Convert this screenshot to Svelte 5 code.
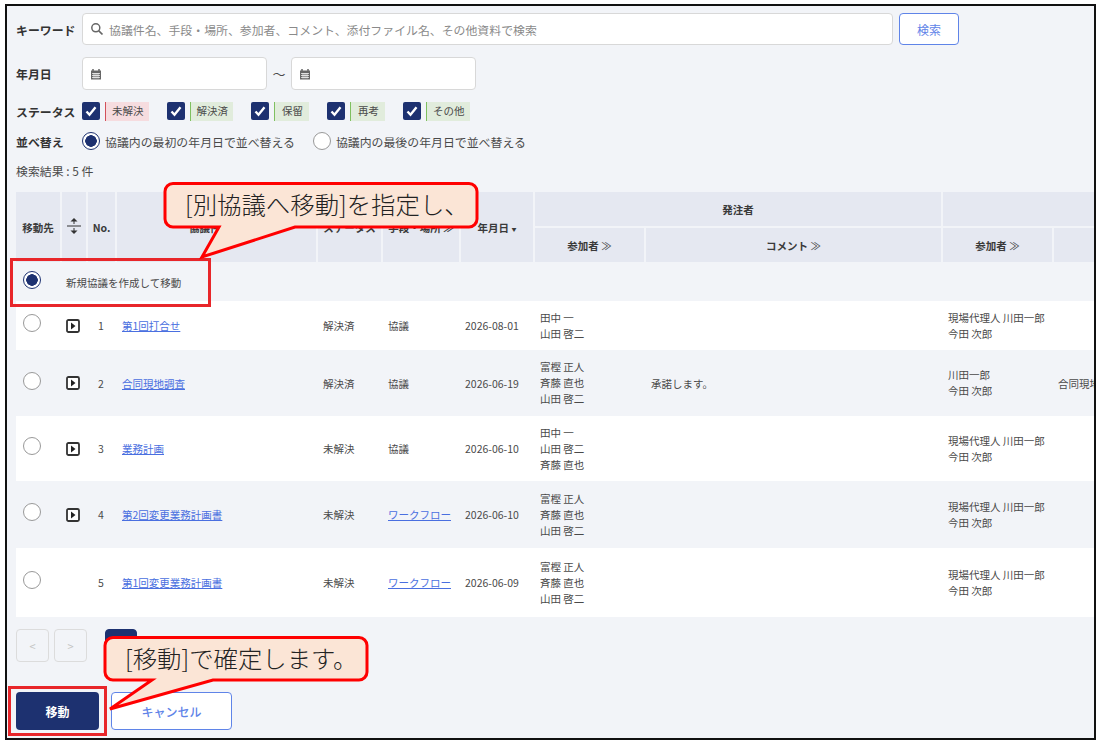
<script>
  const statuses = [
    { label: '未解決', tone: 'red' },
    { label: '解決済', tone: 'green' },
    { label: '保留', tone: 'green' },
    { label: '再考', tone: 'green' },
    { label: 'その他', tone: 'green' }
  ];

  const rows = [
    { no: 1, title: '第1回打合せ', status: '解決済', means: '協議', date: '2026-08-01', owners: ['田中 一', '山田 啓二'], comment: '', others: ['現場代理人 川田一郎', '今田 次郎'], extra: '', h: 49, expand: true },
    { no: 2, title: '合同現地調査', status: '解決済', means: '協議', date: '2026-06-19', owners: ['富樫 正人', '斉藤 直也', '山田 啓二'], comment: '承諾します。', others: ['川田一郎', '今田 次郎'], extra: '合同現地調査', h: 66, expand: true },
    { no: 3, title: '業務計画', status: '未解決', means: '協議', date: '2026-06-10', owners: ['田中 一', '山田 啓二', '斉藤 直也'], comment: '', others: ['現場代理人 川田一郎', '今田 次郎'], extra: '', h: 65, expand: true },
    { no: 4, title: '第2回変更業務計画書', status: '未解決', means: 'ワークフロー', link: true, date: '2026-06-10', owners: ['富樫 正人', '斉藤 直也', '山田 啓二'], comment: '', others: ['現場代理人 川田一郎', '今田 次郎'], extra: '', h: 67, expand: true },
    { no: 5, title: '第1回変更業務計画書', status: '未解決', means: 'ワークフロー', link: true, date: '2026-06-09', owners: ['富樫 正人', '斉藤 直也', '山田 啓二'], comment: '', others: ['現場代理人 川田一郎', '今田 次郎'], extra: '', h: 69, expand: false }
  ];
</script>

{#snippet calendar()}
  <svg class="cal" width="12" height="12" viewBox="0 0 12 12">
    <path d="M1 2.5h10v9H1z" fill="#666" />
    <path d="M3 1v2M9 1v2" stroke="#666" stroke-width="1.5" />
    <path d="M2 5.5h8M2 7.5h8M2 9.5h8M4 5v5.500M6 5v5.500M8 5v5.500" stroke="#fff" stroke-width=".7" />
  </svg>
{/snippet}

{#snippet check()}
  <svg class="check" width="18" height="18" viewBox="0 0 18 18">
    <rect width="18" height="18" rx="2" fill="#1d3170" />
    <path d="M4.500 9.500l3 3.200 6-7.500" fill="none" stroke="#fff" stroke-width="2.400" />
  </svg>
{/snippet}

{#snippet radio(on)}
  <span class="radio" class:on></span>
{/snippet}

<div class="frame">
  <div class="filters">
    <div class="line keyword">
      <span class="label">キーワード</span>
      <div class="input grow">
        <svg width="14" height="14" viewBox="0 0 14 14">
          <circle cx="5.800" cy="5.800" r="4" fill="none" stroke="#666" stroke-width="1.500" />
          <path d="M8.800 8.800l3.700 3.700" stroke="#666" stroke-width="1.700" />
        </svg>
        <span class="placeholder">協議件名、手段・場所、参加者、コメント、添付ファイル名、その他資料で検索</span>
      </div>
      <button class="ghost search">検索</button>
    </div>

    <div class="line dates">
      <span class="label">年月日</span>
      <div class="input date">{@render calendar()}</div>
      <span class="tilde">～</span>
      <div class="input date">{@render calendar()}</div>
    </div>

    <div class="line statuses">
      <span class="label">ステータス</span>
      {#each statuses as s}
        <div class="status">
          {@render check()}
          <span class="tag {s.tone}">{s.label}</span>
        </div>
      {/each}
    </div>

    <div class="line sort">
      <span class="label">並べ替え</span>
      <label class="opt">{@render radio(true)}協議内の最初の年月日で並べ替える</label>
      <label class="opt">{@render radio(false)}協議内の最後の年月日で並べ替える</label>
    </div>

    <div class="count">検索結果 : 5 件</div>
  </div>

  <table>
    <colgroup>
      <col style="width:45px" /><col style="width:26px" /><col style="width:29px" /><col style="width:201px" />
      <col style="width:65px" /><col style="width:78px" /><col style="width:74px" /><col style="width:111px" />
      <col style="width:297px" /><col style="width:111px" /><col style="width:200px" />
    </colgroup>
    <thead>
      <tr class="h1">
        <th rowspan="2">移動先</th>
        <th rowspan="2" class="flush">
          <svg width="14" height="18" viewBox="0 0 14 18">
            <path d="M7 1l3.500 3.500h-7z" fill="#333" /><path d="M7 4v3M7 11v3" stroke="#333" />
            <path d="M0 9h14" stroke="#333" /><path d="M7 17l3.500-3.500h-7z" fill="#333" />
          </svg>
        </th>
        <th rowspan="2">No.</th>
        <th rowspan="2">協議件名 ≫</th>
        <th rowspan="2">ステータス</th>
        <th rowspan="2">手段・場所 ≫</th>
        <th rowspan="2">年月日 <small>▼</small></th>
        <th colspan="2">発注者</th>
        <th colspan="2"></th>
      </tr>
      <tr class="h2">
        <th>参加者 <span class="more">≫</span></th>
        <th>コメント <span class="more">≫</span></th>
        <th>参加者 <span class="more">≫</span></th>
        <th></th>
      </tr>
    </thead>
    <tbody>
      <tr class="fresh">
        <td class="pick">{@render radio(true)}</td>
        <td colspan="10" class="freshtext">新規協議を作成して移動</td>
      </tr>
      {#each rows as r}
        <tr style="height:{r.h}px">
          <td class="pick">{@render radio(false)}</td>
          <td class="flush">
            {#if r.expand}
              <svg class="expand" width="14" height="14" viewBox="0 0 14 14">
                <rect x="1" y="1" width="12" height="12" rx="1.500" fill="#fff" stroke="#333" stroke-width="1.800" />
                <path d="M5 3.500l4.500 3.500L5 10.500z" fill="#222" />
              </svg>
            {/if}
          </td>
          <td class="no">{r.no}</td>
          <td><a href="#top">{r.title}</a></td>
          <td>{r.status}</td>
          <td>{#if r.link}<a href="#top">{r.means}</a>{:else}{r.means}{/if}</td>
          <td class="nowrap">{r.date}</td>
          <td class="lines">{#each r.owners as n}<div>{n}</div>{/each}</td>
          <td>{r.comment}</td>
          <td class="lines">{#each r.others as n}<div>{n}</div>{/each}</td>
          <td class="nowrap">{r.extra}</td>
        </tr>
      {/each}
    </tbody>
  </table>

  <nav class="pager">
    <button class="page" disabled>&lt;</button>
    <button class="page" disabled>&gt;</button>
    <button class="page current">1</button>
  </nav>

  <div class="actions">
    <button class="primary">移動</button>
    <button class="ghost cancel">キャンセル</button>
  </div>

  <!-- 説明用の注釈 -->
  <span class="mark mark-new"></span>
  <span class="mark mark-move"></span>

  <div class="callout callout-top">
    <svg width="320" height="85" viewBox="0 0 320 85">
      <path d="M10 1.500H306a8 8 0 0 1 8 8V37a8 8 0 0 1-8 8H132L39 75 56 45H10a8 8 0 0 1-8-8V9.500a8 8 0 0 1 8-8z" fill="#fbe5d6" stroke="#f00" stroke-width="3" />
    </svg>
    <span class="say">[別協議へ移動]を指定し、</span>
  </div>

  <div class="callout callout-bottom">
    <svg width="270" height="78" viewBox="0 0 270 78">
      <path d="M10 1.500H256a8 8 0 0 1 8 8V36a8 8 0 0 1-8 8H110L7 73 49 44H10a8 8 0 0 1-8-8V9.500a8 8 0 0 1 8-8z" fill="#fbe5d6" stroke="#f00" stroke-width="3" />
    </svg>
    <span class="say">[移動]で確定します。</span>
  </div>
</div>

<style>
  :global(body) {
    background: #fff;
  }

  .frame {
    position: relative;
    box-sizing: border-box;
    width: 1091px;
    height: 736px;
    margin: 4px 0 0 5px;
    padding: 0 0 0 9px;
    border: 2px solid #111;
    background: #f2f4f8;
    overflow: hidden;
    font-family: "Noto Sans CJK JP", "Noto Sans", sans-serif;
    font-size: 11.9px;
    color: #4a4a4a;
  }

  .filters {
    padding-top: 7px;
  }

  .line {
    display: flex;
    align-items: center;
  }

  .label {
    flex: none;
    width: 66px;
    font-weight: 700;
    color: #333;
    white-space: nowrap;
  }

  .input {
    box-sizing: border-box;
    display: flex;
    align-items: center;
    background: #fff;
    border: 1px solid #d8d8d8;
    border-radius: 4px;
  }

  .grow {
    width: 811px;
    flex: none;
    height: 32px;
    padding-left: 7px;
    gap: 5px;
  }

  .placeholder {
    color: #8a8a8a;
    white-space: nowrap;
  }

  .ghost {
    box-sizing: border-box;
    background: #fff;
    border: 1px solid #5f84e8;
    border-radius: 4px;
    color: #5f84e8;
    font-family: inherit;
  }

  .search {
    width: 60px;
    height: 32px;
    margin-left: 6px;
    font-size: 12px;
  }

  .dates {
    margin-top: 12px;
  }

  .date {
    width: 185px;
    height: 33px;
    padding-left: 7px;
  }

  .tilde {
    width: 24px;
    text-align: center;
    font-size: 13px;
  }

  .statuses {
    margin-top: 10px;
    height: 22px;
  }

  .status {
    display: flex;
    align-items: center;
    gap: 5px;
    margin-right: 18px;
  }

  .check {
    display: block;
  }

  .tag {
    box-sizing: border-box;
    min-width: 35px;
    padding: 0 5px 0 6px;
    height: 19px;
    line-height: 18px;
    font-size: 10.500px;
    text-align: center;
    border-left: 1px solid;
  }

  .tag.red {
    background: #f6dcdf;
    border-color: #d2505a;
  }

  .tag.green {
    background: #e1ecdc;
    border-color: #7fc060;
  }

  .sort {
    margin-top: 8px;
    height: 22px;
  }

  .opt {
    display: flex;
    align-items: center;
    gap: 5px;
    margin-right: 18px;
    white-space: nowrap;
  }

  .radio {
    box-sizing: border-box;
    flex: none;
    display: inline-block;
    width: 18px;
    height: 18px;
    border: 1px solid #999;
    border-radius: 50%;
    background: #fff;
  }

  .radio.on {
    border-color: #1d3170;
    background: radial-gradient(circle, #1d3170 0 5.500px, #fff 6px);
  }

  .count {
    margin-top: 10px;
    height: 30px;
    line-height: 18px;
  }

  table {
    table-layout: fixed;
    width: 1236px;
    border-collapse: collapse;
    font-size: 10.500px;
  }

  th {
    background: #e5e8f1;
    border: 2px solid #f2f4f8;
    border-width: 0 2px 2px 0;
    font-weight: 700;
    color: #3a3a3a;
    white-space: nowrap;
    padding: 0;
    text-align: center;
  }

  .h1 {
    height: 35px;
  }

  .h2 {
    height: 36px;
  }

  .more {
    font-weight: 400;
  }

  small {
    font-size: 5px;
    vertical-align: 1px;
  }

  tbody tr {
    background: #f2f4f8;
  }

  tbody tr:nth-child(even) {
    background: #fff;
  }

  td {
    padding: 0 6px;
    vertical-align: middle;
    white-space: nowrap;
    overflow: hidden;
  }

  .fresh {
    height: 38px;
  }

  .freshtext {
    padding-left: 5px;
  }

  td.pick {
    padding: 0 0 0 7px;
    vertical-align: middle;
  }

  .pick .radio {
    display: block;
    margin-top: -5px;
  }

  td.flush {
    padding: 0 0 0 5px;
  }

  .expand {
    display: block;
  }

  td.no {
    padding-left: 11px;
  }

  td.nowrap {
    padding-left: 5px;
  }

  .lines {
    line-height: 16px;
  }

  a {
    color: #4a6fe0;
    text-decoration: underline;
  }

  .pager {
    display: flex;
    margin-top: 12px;
    gap: 5px;
  }

  .page {
    box-sizing: border-box;
    width: 33px;
    height: 33px;
    border: 1px solid #dcdcdc;
    border-radius: 4px;
    background: transparent;
    color: #c4c4c4;
    font-size: 11px;
    font-family: inherit;
  }

  .current {
    width: 32px;
    margin-left: 13px;
    background: #1d3170;
    border-color: #1d3170;
    color: #fff;
  }

  .actions {
    display: flex;
    gap: 12px;
    margin-top: 30px;
  }

  .primary {
    width: 83px;
    height: 38px;
    border: 0;
    border-radius: 4px;
    background: #1d3170;
    color: #fff;
    font-family: inherit;
    font-size: 12px;
    font-weight: 700;
  }

  .cancel {
    width: 121px;
    height: 38px;
    font-size: 12px;
    font-weight: 500;
  }

  /* 注釈は画面の上に重ねる */
  .mark {
    position: absolute;
    box-sizing: border-box;
    border: 3px solid #e8262a;
  }

  .mark-new {
    left: 3px;
    top: 252px;
    width: 201px;
    height: 49px;
  }

  .mark-move {
    left: 1px;
    top: 680px;
    width: 99px;
    height: 50px;
  }

  .callout {
    position: absolute;
  }

  .callout svg {
    display: block;
  }

  .say {
    position: absolute;
    left: 22px;
    top: 3px;
    font-size: 24.400px;
    line-height: 38px;
    font-weight: 300;
    color: #222;
    white-space: nowrap;
  }

  .callout-top {
    left: 156px;
    top: 176px;
  }

  .callout-bottom {
    left: 96px;
    top: 630px;
  }
</style>
